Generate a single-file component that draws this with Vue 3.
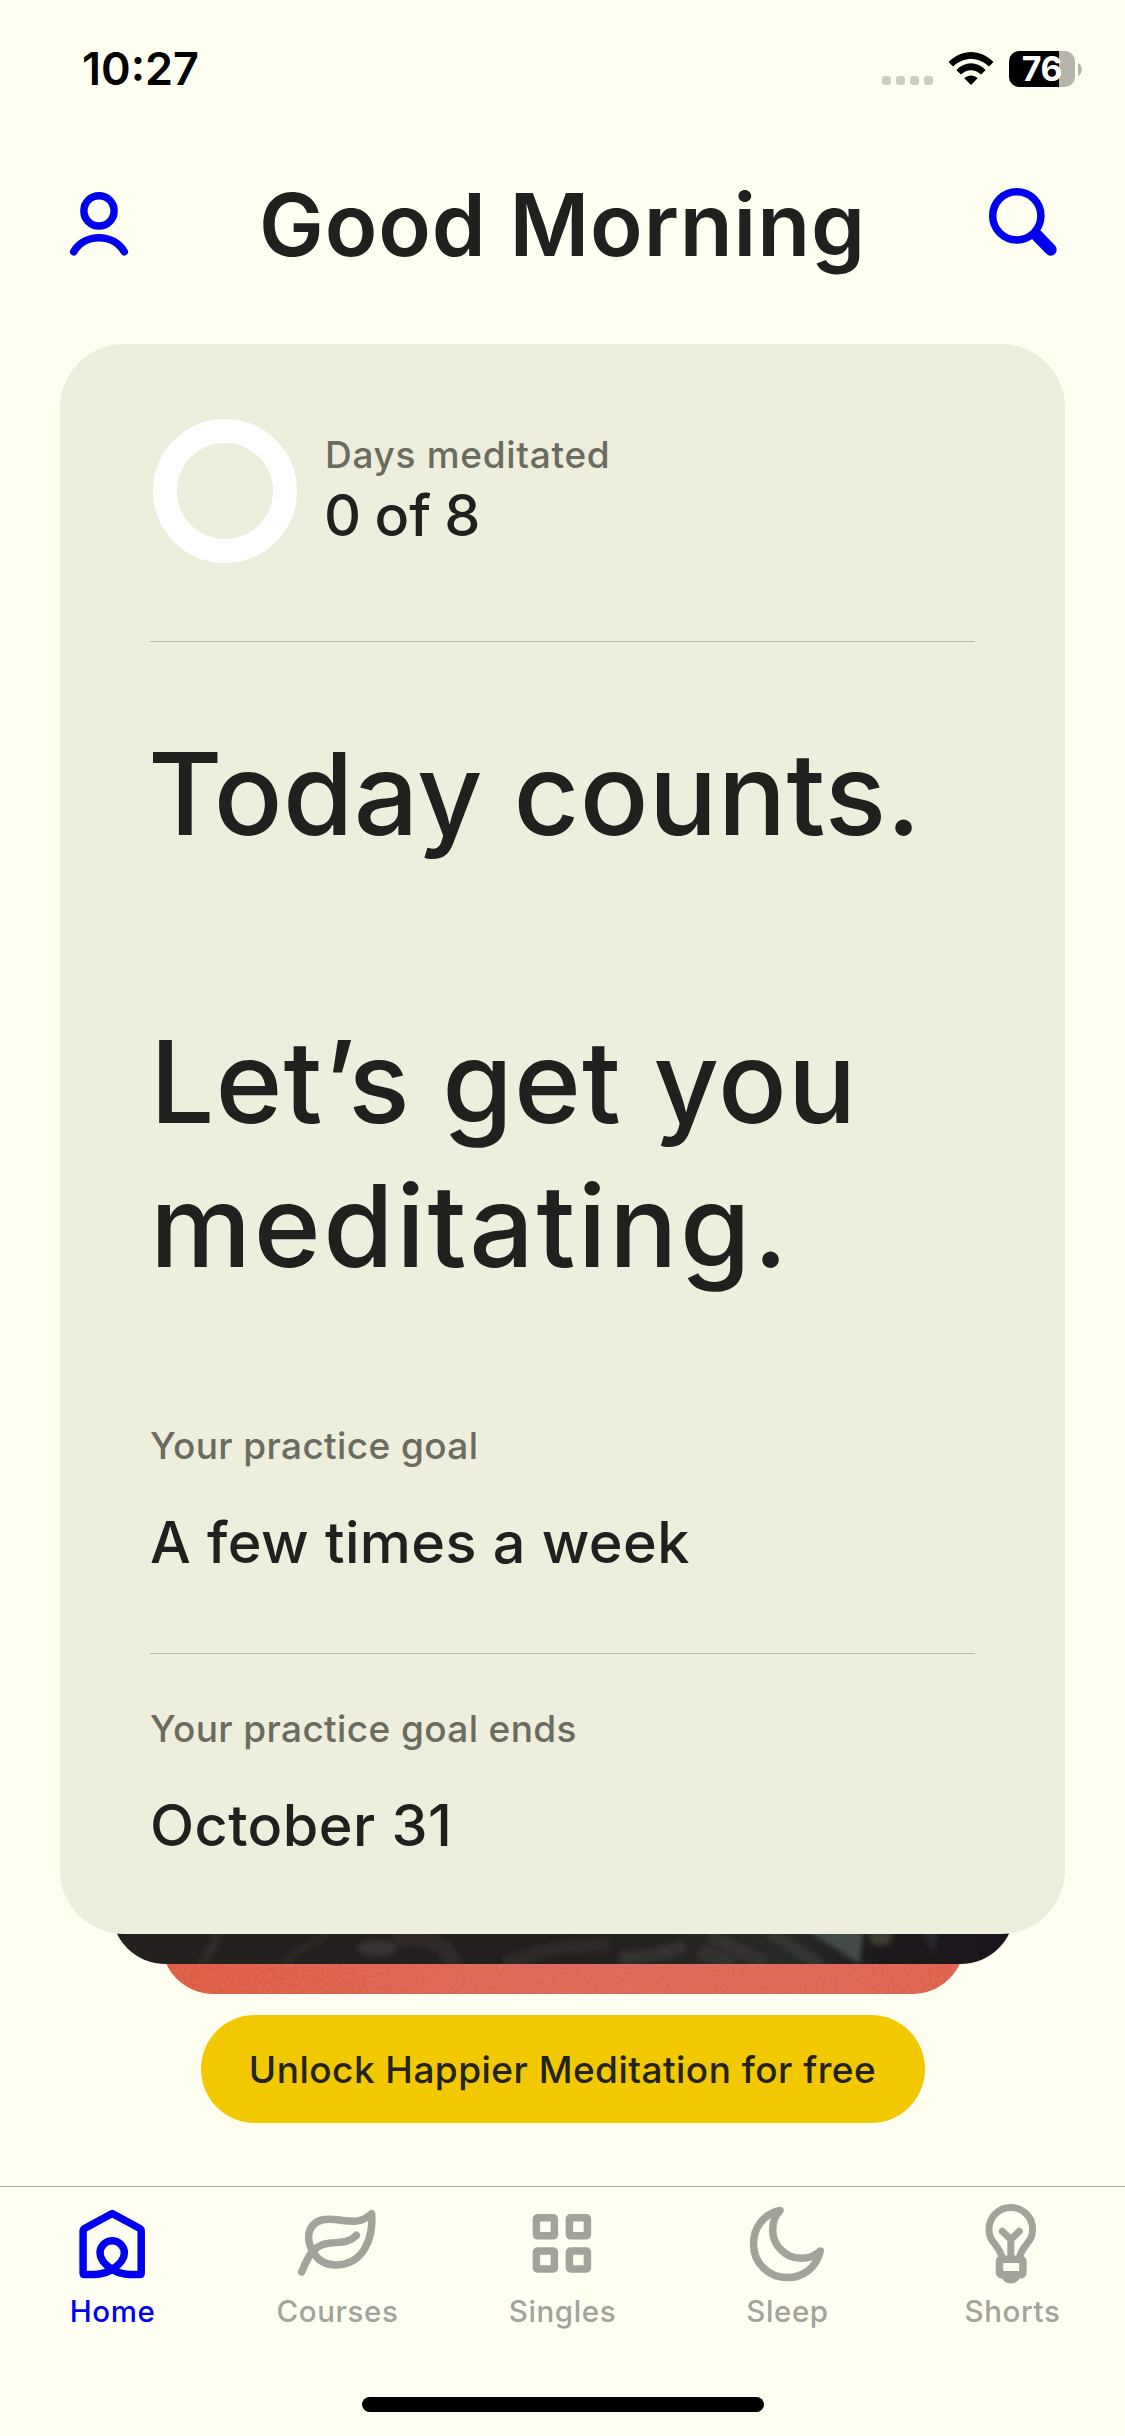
<script setup>
const tabs = ['Home', 'Courses', 'Singles', 'Sleep', 'Shorts']
</script>

<template>
  <main class="screen">
    <div class="status">
      <div class="time"><span>10:27</span></div>
      <div class="indicators">
        <div class="dots"><i v-for="n in 4" :key="n"></i></div>
        <svg class="wifi" width="46" height="36" viewBox="0 0 46 36">
          <path d="M0.500 11C13.500-2.500 32.500-2.500 45.500 11L41 15.500C30.500 5.500 15.500 5.500 5 15.500Z" />
          <path d="M8.300 19C17 10 29 10 37.700 19L33 23.500C27 17.800 19 17.800 13 23.500Z" />
          <path d="M16.300 27.300C20.500 23.500 25.500 23.500 29.700 27.300L23 34Z" />
        </svg>
        <div class="battery"><div class="cell"><span>76</span></div><svg width="4" height="13" viewBox="0 0 4 13"><path d="M0 0C5 2 5 11 0 13Z" fill="#b5b5aa" /></svg></div>
      </div>
    </div>

    <header class="header">
      <svg width="60" height="70" viewBox="0 0 60 70" fill="none" stroke="#0000f0" stroke-width="7.500" stroke-linecap="round">
        <circle cx="30" cy="22.900" r="15.100" />
        <path d="M4.700 63.700C16 45 44 45 55.300 63.700" />
      </svg>
      <h1><span>Good Morning</span></h1>
      <svg width="70" height="70" viewBox="0 0 70 70" fill="none" stroke="#0000f0" stroke-linecap="round">
        <circle cx="26.800" cy="27.800" r="24.100" stroke-width="7.500" />
        <path d="M47 47.500L60.700 61.700" stroke-width="12" />
      </svg>
    </header>

    <section class="stack">
      <article class="card">
        <div class="progress">
          <div class="ring"></div>
          <div>
            <p class="label days"><span>Days meditated</span></p>
            <p class="value count"><span>0 of 8</span></p>
          </div>
        </div>
        <div class="headline">
          <p class="l1"><span>Today counts.</span></p>
          <p class="l2"><span>Let’s get you</span></p>
          <p class="l3"><span>meditating.</span></p>
        </div>
        <p class="label goal"><span>Your practice goal</span></p>
        <p class="value often"><span>A few times a week</span></p>
        <hr />
        <p class="label ends"><span>Your practice goal ends</span></p>
        <p class="value date"><span>October 31</span></p>
      </article>
      <div class="peek dark">
        <svg width="903" height="90" viewBox="2 0 903 90" fill="none">
          <defs>
            <filter id="soft" x="-10%" y="-50%" width="120%" height="200%"><feGaussianBlur stdDeviation="2.500" /></filter>
            <linearGradient id="night"><stop offset="0" stop-color="#242020" /><stop offset=".5" stop-color="#221f1e" /><stop offset=".75" stop-color="#292928" /><stop offset=".85" stop-color="#1d191b" /><stop offset="1" stop-color="#1b151c" /></linearGradient>
          </defs>
          <rect width="907" height="90" fill="url(#night)" />
          <g filter="url(#soft)">
            <path d="M93 90Q103 74 109 58" stroke="#2e2a29" stroke-width="10" />
            <path d="M174 90Q192 72 220 60" stroke="#2d2928" stroke-width="6" />
            <ellipse cx="268" cy="74" rx="20" ry="9" fill="#393332" />
            <path d="M283 66C312 60 338 66 344 92" stroke="#302b2a" stroke-width="16" />
            <path d="M395 90C430 76 450 72 500 70" stroke="#2e2a29" stroke-width="14" />
            <path d="M510 84Q545 84 575 72M600 62L655 88M625 90L590 78" stroke="#343030" stroke-width="13" />
            <path d="M660 58L712 92" stroke="#323432" stroke-width="12" />
            <path d="M697 56H754L750 90Z" fill="#434b46" />
            <ellipse cx="771" cy="63" rx="12" ry="9" fill="#3c3d32" />
            <path d="M812 58H829L824 80Z" fill="#252b2e" />
          </g>
        </svg>
      </div>
      <div class="peek red">
        <svg width="807" height="90" viewBox="0 0 807 90">
          <filter id="grain" x="0" y="0" width="100%" height="100%">
            <feTurbulence type="fractalNoise" baseFrequency=".35" numOctaves="2" />
            <feColorMatrix values="0 0 0 0 .65  0 0 0 0 .4  0 0 0 0 .32  1.400 0 0 0 -.5" />
          </filter>
          <rect width="807" height="90" filter="url(#grain)" opacity=".35" />
        </svg>
      </div>
    </section>

    <button class="unlock"><span>Unlock Happier Meditation for free</span></button>

    <nav class="tabs">
      <a v-for="(tab, i) in tabs" :key="tab" :class="{ active: i === 0 }">
        <svg width="90" height="90" viewBox="0.500 0 90 90" fill="none" stroke="currentColor" stroke-width="7.500" stroke-linecap="round" stroke-linejoin="round">
          <path v-if="i === 0" d="M44.700 75.500C35 69 32.500 63 32.500 59A12.200 12.200 0 0 1 56.900 59C56.900 63 54.500 69 44.700 75.500C36 81 26 80.500 17 80.500Q15.600 80.500 15.600 79V36.500Q15.600 35.500 17 34.500L44.700 19.500L72.400 34.500Q73.700 35.500 73.700 36.500V79Q73.700 80.500 72.400 80.500C63 80.500 53.500 81 44.700 75.500" />
          <g v-else-if="i === 1">
            <path d="M20.200 57.700C11 40 18 25.500 36 25.200C50 24.800 66 33 79.200 19.700C81 46 70 71 42.500 71C32 71 25 66 20.200 57.700Z" />
            <path d="M9.200 78C17 58 23 50.500 38 49C50 48 56 49 63.800 41.300" />
          </g>
          <g v-else-if="i === 2">
            <rect x="18.900" y="23.800" width="18" height="18" rx="1" />
            <rect x="51.900" y="23.800" width="18" height="18" rx="1" />
            <rect x="18.900" y="57" width="18" height="18" rx="1" />
            <rect x="51.900" y="57" width="18" height="18" rx="1" />
          </g>
          <path v-else-if="i === 3" d="M37.500 16.500C21 20 11 33.500 11 50C11 69 26 83.600 44.800 83.600C60 83.600 74 74 77.800 57C73 61.500 66 64.300 58.500 64.300C43 64.300 30.200 51.500 30.200 36C30.200 29 33 21 37.500 16.500Z" />
          <g v-else>
            <path d="M34.500 63C30.500 49 21.500 49 21.500 35.200A21.800 21.800 0 0 1 65.100 35.200C65.100 49 56 49 52 63M34.800 37.300L43.300 45.500L51.800 37.300M43.300 46V62" stroke-width="7" />
            <rect x="32" y="65.300" width="23.400" height="15.400" rx="2" />
            <path d="M36.500 82.500C38 89 49 89 50.500 82.500Z" fill="currentColor" stroke-width="4" />
          </g>
        </svg>
        <span>{{ tab }}</span>
      </a>
    </nav>
    <div class="home-bar"></div>
  </main>
</template>

<style>
body { background: #fffff1; }
</style>

<style scoped>
* { box-sizing: border-box; margin: 0; }
.screen { width: 1125px; height: 2436px; overflow: hidden; background: #fffff1; color: #21201f; font-family: Inter, "Liberation Sans", sans-serif; display: flex; flex-direction: column; white-space: nowrap; }
svg { display: block; overflow: visible; }
.status { height: 140px; padding: 51px 43px 0 82px; display: flex; justify-content: space-between; }
.time { font-size: 45px; line-height: 40px; font-weight: 600; color: #000; margin-top: -2px; }
.indicators { display: flex; height: 36px; }
.dots { display: flex; gap: 5px; align-items: flex-end; padding-bottom: 2px; margin-right: 15px; }
.dots i { width: 9px; height: 9px; border-radius: 3px; background: #ccccc0; }
.wifi { margin-right: 15px; }
.battery { display: flex; align-items: center; gap: 3px; }
.cell { width: 66px; height: 36px; border-radius: 10px; background: linear-gradient(90deg, #000 76%, #b5b5aa 76%); color: #fff; font-size: 34px; font-weight: 700; line-height: 36px; text-align: center; letter-spacing: -.5px; }
.header { height: 204px; padding: 48px 65px 0 69px; display: flex; justify-content: space-between; align-items: flex-start; }
h1 { font-size: 86.500px; line-height: 80px; font-weight: 600; letter-spacing: .900px; margin: -3px 0 0 6px; }
.stack { height: 1650px; padding: 0 60px; position: relative; z-index: 0; }
.card { width: 1005px; height: 1590px; border-radius: 64px; background: #edeedb; padding: 75px 90px 0; }
.progress { height: 223px; display: flex; gap: 28px; border-bottom: 1px solid #b9baa6; }
.ring { width: 144px; height: 144px; border-radius: 50%; border: 24px solid #fff; margin-left: 3px; }
.label { font-size: 37px; line-height: 44px; color: #6b6b60; font-weight: 450; letter-spacing: .38px; }
.value { font-size: 57.500px; line-height: 66px; font-weight: 500; letter-spacing: .45px; }
.days { margin-top: 14px; letter-spacing: .7px; }
.count { margin-top: 5px; word-spacing: -2px; letter-spacing: 0; margin-left: -1px; }
.headline { font-size: 114px; line-height: 144px; font-weight: 500; padding-top: 80px; height: 740px; }
.l1 { margin-left: -2px; letter-spacing: .3px; }
.l2 { margin-top: 144px; letter-spacing: 1.100px; }
.l3 { letter-spacing: 2.500px; }
.goal { margin-top: 42px; }
.often { margin-top: 41px; }
hr { border: 0; height: 1px; background: #b9baa6; margin-top: 78px; }
.ends { margin-top: 53px; }
.date { margin-top: 41px; }
.peek { overflow: hidden; position: relative; left: 50%; transform: translateX(-50%); }
.dark { width: 903px; height: 90px; margin-top: -60px; border-radius: 0 0 54px 54px; z-index: -1; }
.red { width: 803px; height: 90px; margin-top: -60px; border-radius: 0 0 52px 52px; z-index: -2; background: linear-gradient(90deg, #e05a42, #de6757 45%, #de6756 80%, #df604a); }
.unlock { width: 724px; height: 108px; margin: 21px auto 0; border: 0; padding: 0; border-radius: 54px; background: #f2c900; color: #24231a; font: 500 37px/109px Inter, sans-serif; letter-spacing: .47px; text-align: center; }
.tabs { height: 211px; margin-top: 63px; border-top: 1px solid #aaab9e; display: flex; padding-top: 7px; }
.tabs a { width: 225px; color: #a2a39b; display: flex; flex-direction: column; align-items: center; font-size: 29.500px; line-height: 36px; font-weight: 500; }
.tabs a > span { margin-top: 9px; letter-spacing: .6px; }
.tabs .active { color: #0000f0; }
.home-bar { width: 402px; height: 15px; border-radius: 8px; background: #000; margin: 0 auto; flex: none; }
</style>
